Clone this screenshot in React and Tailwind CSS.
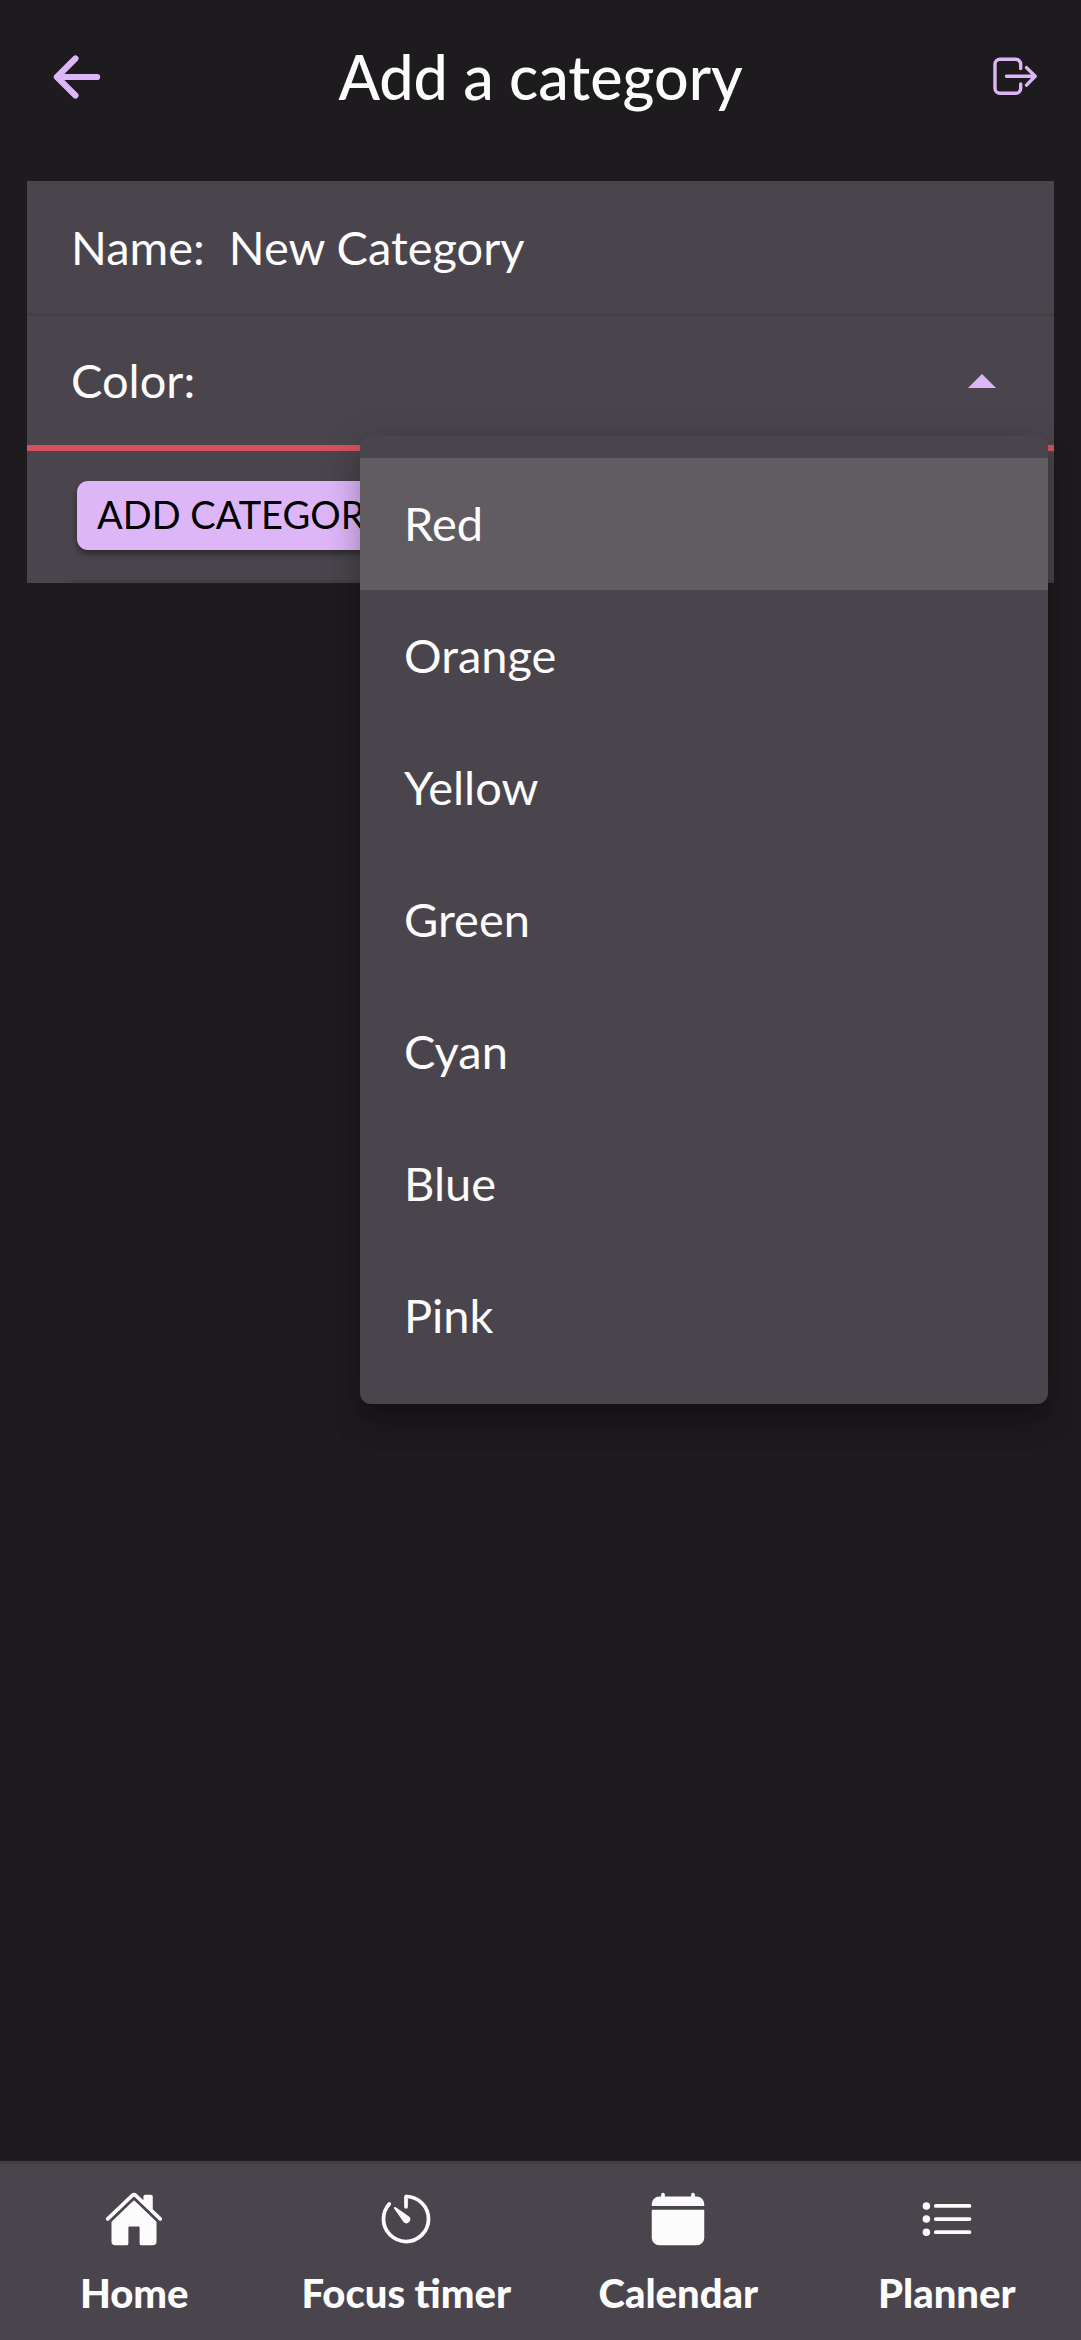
import { IoArrowBack, IoHome, IoTimerOutline, IoCalendarClear, IoListOutline } from 'react-icons/io5'

const colors = ['Red', 'Orange', 'Yellow', 'Green', 'Cyan', 'Blue', 'Pink']

const tabs = [
  { label: 'Home', icon: IoHome },
  { label: 'Focus timer', icon: IoTimerOutline },
  { label: 'Calendar', icon: IoCalendarClear },
  { label: 'Planner', icon: IoListOutline }
]

function LogOutIcon() {
  return (
    <svg viewBox="0 0 44 44" className="size-11" fill="none" stroke="currentColor" strokeWidth="3.4" strokeLinecap="round" strokeLinejoin="round">
      <path d="M27.7 13.6V9.3a5 5 0 0 0-5-5H7a5 5 0 0 0-5 5v24a5 5 0 0 0 5 5h15.7a5 5 0 0 0 5-5V29" />
      <path d="M13.5 21.3H42M33.5 12.6l8.7 8.7-8.7 8.8" />
    </svg>
  )
}

function Header() {
  return (
    <header className="flex items-center justify-between h-[154px] px-11 mb-[27px]">
      <button type="button" aria-label="Back" className="w-[66px] text-[#ddb6f8]">
        <IoArrowBack className="size-[66px]" />
      </button>
      <h1 className="text-[61px] leading-[80px] font-medium">Add a category</h1>
      <button type="button" aria-label="Log out" className="flex justify-end w-[66px] text-[#ddb6f8]">
        <LogOutIcon />
      </button>
    </header>
  )
}

function ColorMenu({ selected }) {
  return (
    <ul role="listbox" aria-label="Color" className="absolute top-[120px] right-[6px] w-[688px] py-[22px] rounded-[11px] bg-[#4a454c] shadow-[0_14px_14px_-8px_rgba(0,0,0,0.2),0_22px_28px_3px_rgba(0,0,0,0.14),0_8px_38px_5px_rgba(0,0,0,0.12)]">
      {colors.map(color => (
        <li key={color} role="option" aria-selected={color === selected}>
          <button
            type="button"
            className={`flex items-center w-full h-[132px] px-11 pb-0.5 text-[47px] ${color === selected ? 'bg-[#615c62]' : ''}`}
          >
            {color}
          </button>
        </li>
      ))}
    </ul>
  )
}

function App() {
  return (
    <div className="flex flex-col min-h-screen bg-[#1e1b1e] text-[#fcfcfc] font-['Lato',sans-serif]">
      <Header />

      <form className="mx-[27px] bg-[#4a454c]">
        <div className="flex items-center gap-6 h-[135px] px-11 border-b-[3px] border-[#414141] text-[47px]">
          <label htmlFor="name">Name:</label>
          <input id="name" type="text" defaultValue="New Category" className="flex-1 min-w-0 bg-transparent outline-none" />
        </div>

        <div className="relative h-[135px] border-b-[6px] border-[#d4525f]">
          <button type="button" aria-haspopup="listbox" aria-expanded="true" className="flex items-center justify-between w-full h-full pl-11 pr-[58px] text-[47px]">
            Color:
            <svg viewBox="0 0 28 14" className="w-7 h-[14px] fill-[#ddb6f8]">
              <path d="M0 14 14 0l14 14z" />
            </svg>
          </button>
          <ColorMenu selected="Red" />
        </div>

        <div className="flex items-center h-[132px] ml-11 pl-[6px] border-b-[3px] border-[#414141] text-[38px] text-black">
          <button type="submit" className="h-[69px] px-5 pb-0.5 rounded-[11px] bg-[#ddb6f8] shadow-[0_4px_6px_rgba(0,0,0,0.4)]">ADD CATEGORY</button>
        </div>
      </form>

      <nav className="flex mt-auto h-[179px] border-t-[3px] border-[#414141] bg-[#4a454c]">
        {tabs.map(({ label, icon: Icon }) => (
          <a key={label} href="#" className="flex flex-col items-center flex-1 gap-5 px-[33px] pt-[25px] whitespace-nowrap">
            <Icon className="size-[60px]" />
            <span className="text-[40px] leading-[48px] font-black">{label}</span>
          </a>
        ))}
      </nav>
    </div>
  )
}

export default App
